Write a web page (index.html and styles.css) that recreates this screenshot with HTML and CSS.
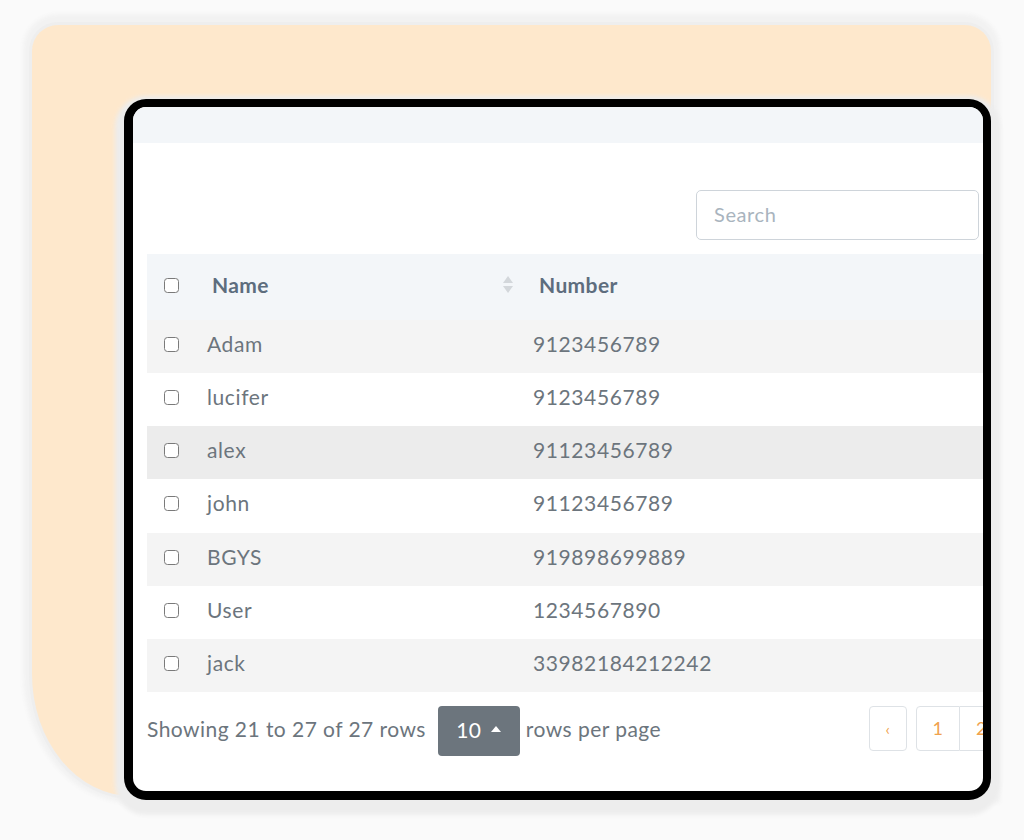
FILE: index.html
```html
<!DOCTYPE html>
<html>
<head>
<meta charset="utf-8">
<link rel="stylesheet" href="styles.css">
</head>
<body>
<div class="peach">
  <div class="card">
    <div class="topband"></div>
    <div class="content">
      <div class="toolbar">
        <div class="search">Search</div>
      </div>
      <div class="table">
        <div class="row head">
          <div class="cell chk"><span class="box"></span></div>
          <div class="cell name">Name
            <svg class="sort" width="12" height="19" viewBox="0 0 12 19"><path d="M6 1 L11 8 H1 Z" fill="#d3d7db"/><path d="M6 18 L11 11 H1 Z" fill="#d3d7db"/></svg>
          </div>
          <div class="cell num">Number</div>
        </div>
        <div class="row odd"><div class="cell chk"><span class="box"></span></div><div class="cell name">Adam</div><div class="cell num">9123456789</div></div>
        <div class="row"><div class="cell chk"><span class="box"></span></div><div class="cell name">lucifer</div><div class="cell num">9123456789</div></div>
        <div class="row hover"><div class="cell chk"><span class="box"></span></div><div class="cell name">alex</div><div class="cell num">91123456789</div></div>
        <div class="row"><div class="cell chk"><span class="box"></span></div><div class="cell name">john</div><div class="cell num">91123456789</div></div>
        <div class="row odd"><div class="cell chk"><span class="box"></span></div><div class="cell name">BGYS</div><div class="cell num">919898699889</div></div>
        <div class="row"><div class="cell chk"><span class="box"></span></div><div class="cell name">User</div><div class="cell num">1234567890</div></div>
        <div class="row odd"><div class="cell chk"><span class="box"></span></div><div class="cell name">jack</div><div class="cell num">33982184212242</div></div>
      </div>
      <div class="footer">
        <span class="info">Showing 21 to 27 of 27 rows</span>
        <span class="pagesize">10 <svg width="10" height="6" viewBox="0 0 10 6"><path d="M5 0 L10 6 H0 Z" fill="#fff"/></svg></span>
        <span class="info">rows per page</span>
        <div class="pager">
          <span class="pg prev">‹</span>
          <span class="pg first">1</span>
          <span class="pg">2</span>
        </div>
      </div>
    </div>
  </div>
</div>
</body>
</html>
```
FILE: styles.css
```css
html, body { margin: 0; padding: 0; }
body {
  background: #fafafa;
  width: 1024px;
  height: 840px;
  overflow: hidden;
  padding: 25px 0 0 32px;
  box-sizing: border-box;
  font-family: "Lato", "Noto Sans", sans-serif;
}
.peach {
  width: 959px;
  height: 771px;
  background: #fee8cc;
  border-radius: 26px 26px 0 100px / 26px 26px 0 122px;
  box-shadow: 0 0 0 3px #eeeeee, 0 -2px 4px 9px #f2f2f2;
  padding: 74px 0 0 92px;
  box-sizing: border-box;
}
.card {
  width: 867px;
  height: 701px;
  box-sizing: border-box;
  border: 8px solid #000;
  border-width: 8px 8px 9px 9px;
  border-radius: 22px;
  background: #fff;
  overflow: hidden;
  box-shadow: 0 6px 4px 9px #ededed;
}
.topband { height: 36px; background: #f3f6f9; }
.content { padding: 0 0 0 14px; width: 1000px; }
.toolbar { width: 832px; display: flex; justify-content: flex-end; padding-top: 47px; }
.search {
  width: 283px;
  height: 50px;
  box-sizing: border-box;
  border: 1px solid #ced4da;
  border-radius: 5px;
  padding-left: 17px;
  padding-bottom: 2px;
  display: flex;
  align-items: center;
  color: #a9b4be;
  font-size: 20px;
  letter-spacing: 0.6px;
}
.table { margin-top: 14px; width: 1000px; }
.row {
  display: grid;
  grid-template-columns: 48px 326px 1fr;
  height: 53.14px;
  align-items: center;
  color: #6c757d;
  font-size: 21px;
  letter-spacing: 0.6px;
}
.row .cell { padding-bottom: 6px; }
.row.head { height: 66px; background: #f3f6f9; color: #5d6d7e; font-weight: 700; letter-spacing: 0.4px; }
.row.odd { background: #f4f4f4; }
.row.hover { background: #ececec; }
.cell.chk { padding-left: 17px; display: flex; align-items: center; }
.row .cell.chk { padding-bottom: 4px; }
.box {
  width: 13px; height: 13px;
  border: 1.7px solid #7a7a7a;
  border-radius: 3.5px;
  background: #fff;
  display: block;
}
.cell.name { padding-left: 12px; display: flex; align-items: center; justify-content: space-between; padding-right: 7px; }
.head .cell.name { padding-left: 17px; }
.sort { display: block; }
.cell.num { padding-left: 12px; }
.head .cell.num { padding-left: 18px; }
.footer {
  display: flex;
  align-items: center;
  padding-top: 14px;
  color: #6c757d;
  font-size: 21px;
  letter-spacing: 0.45px;
  width: 857px;
}
.info { padding-bottom: 5px; }
.pagesize {
  margin: 0 6px 0 12px;
  width: 82px; height: 50px;
  box-sizing: border-box;
  background: #6c757d;
  border-radius: 4px;
  color: #fff;
  display: flex; align-items: center; justify-content: center;
  gap: 10px;
  font-size: 21px;
  padding-bottom: 3px;
}
.pager { display: flex; margin-left: auto; align-self: flex-start; }
.pg {
  height: 45px;
  width: 44px;
  box-sizing: border-box;
  border: 1px solid #dee2e6;
  display: flex; align-items: center; justify-content: center;
  color: #f0a24d;
  font-size: 18px;
}
.pg.prev { width: 38px; border-radius: 4px; margin-right: 9px; font-size: 16px; }
.pg.first { border-radius: 4px 0 0 4px; }
.pg + .pg:not(.first) { border-left: none; }
```
